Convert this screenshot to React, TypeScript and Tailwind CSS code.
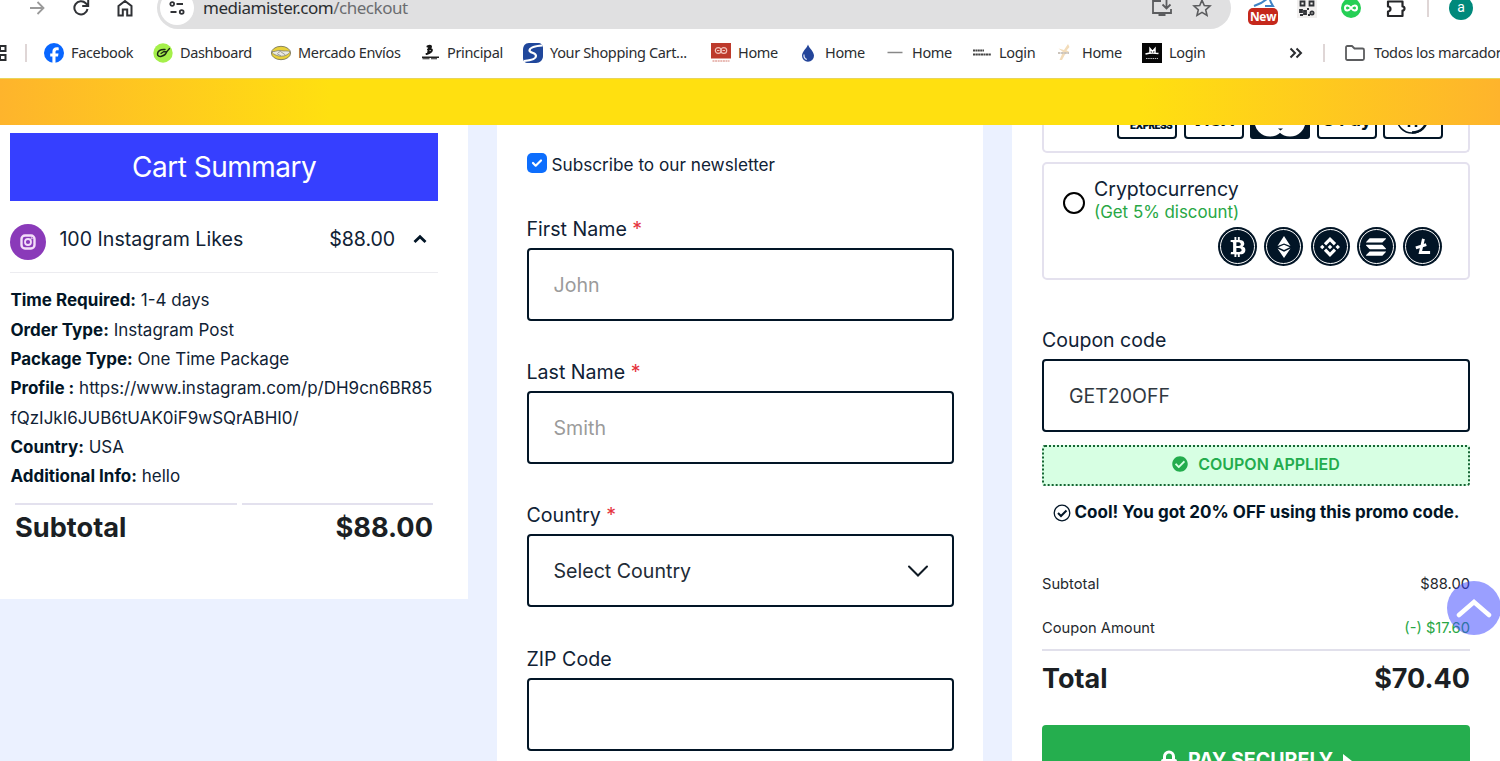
import React from 'react';
import { FaBtc, FaCheckCircle } from 'react-icons/fa';
import { SiBinance, SiSolana } from 'react-icons/si';

// Bookmark favicons
const FacebookIcon = () => (
  <svg className="w-5 h-5" viewBox="0 0 20 20">
    <circle cx="10" cy="10" r="10" fill="#0866ff" />
    <path d="M8.4 20v-6.6H6.2v-3h2.2V9c0-3.2 1.5-4.7 4.6-4.7.6 0 1.3.1 1.7.2v2.7h-1.2c-1.5 0-2 .6-2 2v1.2h3l-.5 3h-2.5V20z" fill="#fff" />
  </svg>
);

const DashboardIcon = () => (
  <svg className="w-5 h-5" viewBox="0 0 20 20">
    <circle cx="10" cy="10" r="9.7" fill="#a5f04a" />
    <path d="M12 6.5C7 6 4.500 8.500 4.500 11c0 2 2 3 4 2.300 2-.6 4.500-2.300 5-4.300" fill="none" stroke="#1c2b12" strokeWidth="1.5" strokeLinecap="round" />
    <path d="M8 10.500l3-2 2.500.5 3-3.500" fill="none" stroke="#1c2b12" strokeWidth="1.3" strokeLinecap="round" />
  </svg>
);

const MercadoIcon = () => (
  <svg className="w-5 h-5" viewBox="0 0 20 20">
    <ellipse cx="10" cy="10" rx="9.6" ry="6.7" fill="#e8d13b" stroke="#6d6b52" strokeWidth=".8" />
    <path d="M1 8.500c3 .3 4.500-.7 6.500-1 2-.2 3.500.5 5.500.5s4-.2 6 .5c0 1-2 3-4.500 4-2 .8-6.500 1-8.500 0C3.500 11.500 1 10.500 1 8.500z" fill="#e9e9e2" stroke="#77756a" strokeWidth=".7" />
    <path d="M7 9.500l2.500-1 5 3.500M6 10.500l4 2.500" fill="none" stroke="#8b8a80" strokeWidth=".8" />
  </svg>
);

const PrincipalIcon = () => (
  <svg className="w-5 h-5" viewBox="0 0 20 20">
    <path d="M7.5 3.500c3-1.500 5-.5 2 2.700M8 6.500c5-1.500 5 1.500 1 3.500L6.500 11M9.500 3L8 10.500" fill="none" stroke="#151515" strokeWidth="2" strokeLinecap="round" />
    <path d="M2 13.500h17v1.500H2zM2.500 15.300h7v1h-7zM11 15.300h6v1h-6z" fill="#222" />
  </svg>
);

const ShoppingIcon = () => (
  <svg className="w-5 h-5" viewBox="0 0 20 20">
    <path d="M6 0h9c3 0 5 2 5 5v8c0 4-3 7-7 7H5c-3 0-5-2-5-5V7c0-4 2-7 6-7z" fill="#20479b" />
    <path d="M19.500 2.500C13 3 6.500 4.500 6.500 7.500c0 2.700 6.500 2 6.500 5.500 0 2.700-5 4.500-12 5" fill="none" stroke="#fff" strokeWidth="2.2" />
  </svg>
);

const RedIcon = () => (
  <svg className="w-5 h-5" viewBox="0 0 20 20">
    <path d="M0 0h20v15.500H0z" fill="#bd3a2c" />
    <circle cx="7.2" cy="7.5" r="2.9" fill="none" stroke="#f2c2ba" strokeWidth="1.2" />
    <circle cx="12.8" cy="7.5" r="2.9" fill="none" stroke="#f2c2ba" strokeWidth="1.2" />
    <path d="M6 7.500h2.500M11.500 7.500H14" stroke="#f2c2ba" />
    <path d="M1.500 18h17" stroke="#e2a59d" strokeWidth="1.6" strokeDasharray="2 .6" />
  </svg>
);

const DropIcon = () => (
  <svg className="w-5 h-5" viewBox="0 0 20 20">
    <path d="M10 1.500c1 3.500 6 7 6 11.300A6 6 0 0 1 4 12.800C4 8.500 9 5 10 1.500z" fill="#24459a" />
    <path d="M6 11.500c-.3 2.500.8 4.200 2.800 5" fill="none" stroke="#dfe6f7" strokeWidth="1.2" />
  </svg>
);

const DashIcon = () => (
  <svg className="w-5 h-5" viewBox="0 0 20 20">
    <path d="M2.500 9.500h15" stroke="#888" strokeWidth="1.5" />
  </svg>
);

const WordmarkIcon = () => (
  <svg className="w-5 h-5" viewBox="0 0 20 20">
    <path d="M1 7.500h11" stroke="#444" strokeWidth="1.8" strokeDasharray="2 .4" />
    <path d="M1 11.500h18" stroke="#444" strokeWidth="1.8" strokeDasharray="2.2 .4" />
  </svg>
);

const FeatherIcon = () => (
  <svg className="w-5 h-5" viewBox="0 0 20 20">
    <path d="M13 1L9 7 3.500 5.500 8 9l-3.500 8H7l3-5.500 4-3-2.500-1L14.500 4z" fill="#f3dcb9" />
    <path d="M3 10h11" stroke="#cbc4bc" strokeWidth="1.8" strokeDasharray="2.5 .6" />
  </svg>
);

const BlackIcon = () => (
  <svg className="w-5 h-5" viewBox="0 0 20 20">
    <path d="M0 0h20v20H0z" fill="#050505" />
    <path d="M8 10.500V5.500l2.500 3 2.500-3v5M3.500 11c4-1.200 9-1.200 13-.5" fill="none" stroke="#fff" strokeWidth="1.5" />
    <path d="M4 15.500h12" stroke="#bbb" strokeDasharray="1.5 .7" />
  </svg>
);

const bookmarks = [
  { label: 'Facebook', icon: FacebookIcon, width: 'w-[62px]' },
  { label: 'Dashboard', icon: DashboardIcon, width: 'w-[71px]' },
  { label: 'Mercado Envíos', icon: MercadoIcon, width: 'w-[102px]' },
  { label: 'Principal', icon: PrincipalIcon, width: 'w-[56px]' },
  { label: 'Your Shopping Cart...', icon: ShoppingIcon, width: 'w-[141px]' },
  { label: 'Home', icon: RedIcon, width: 'w-10' },
  { label: 'Home', icon: DropIcon, width: 'w-10' },
  { label: 'Home', icon: DashIcon, width: 'w-10' },
  { label: 'Login', icon: WordmarkIcon, width: 'w-9' },
  { label: 'Home', icon: FeatherIcon, width: 'w-10' },
  { label: 'Login', icon: BlackIcon, width: 'w-9' },
];

const details = [
  { label: 'Time Required:', value: '1-4 days' },
  { label: 'Order Type:', value: 'Instagram Post' },
  { label: 'Package Type:', value: 'One Time Package' },
  { label: 'Profile :', value: 'https://www.instagram.com/p/DH9cn6BR85fQzIJkI6JUB6tUAK0iF9wSQrABHI0/' },
  { label: 'Country:', value: 'USA' },
  { label: 'Additional Info:', value: 'hello' },
];

const EthereumIcon = () => (
  <svg className="w-[14px] h-[22px]" viewBox="0 0 14 22" fill="currentColor">
    <path d="M7 0l6.500 10L7 7.500.5 10zM7 8.700l5.800 2.500L7 14l-5.800-2.800zM.5 12.500L7 15.700l6.500-3.200L7 22z" />
  </svg>
);

const LitecoinIcon = () => (
  <svg className="w-[19px] h-[19px]" viewBox="0 0 20 20" fill="none" stroke="currentColor" strokeWidth="3">
    <path d="M11 2L7.700 16.300H18M3 11.500l11-3.500" />
  </svg>
);

const InstagramIcon = () => (
  <svg className="w-4 h-4" viewBox="0 0 16 16" fill="none" stroke="currentColor">
    <rect x="1.5" y="1.5" width="13" height="13" rx="3.5" strokeWidth="2.4" />
    <circle cx="8" cy="8" r="3" strokeWidth="1.8" />
    <circle cx="11.7" cy="4.3" r=".6" strokeWidth="1" />
  </svg>
);

const LockIcon = () => (
  <svg className="w-[18px] h-[21px]" viewBox="0 0 18 21">
    <path d="M4.500 10V6.500a4.500 4.500 0 0 1 9 0V10" fill="none" stroke="currentColor" strokeWidth="3" />
    <rect x="1" y="9" width="16" height="12" rx="2" fill="currentColor" />
  </svg>
);

function Toolbar() {
  return (
    <div className="h-[29px] overflow-hidden">
      <div className="h-[42px] -mt-[13px] flex items-center text-[#303236]">
        <svg className="w-5 h-5 ml-[27px]" viewBox="0 0 20 20" fill="none" stroke="#9a9a9a" strokeWidth="1.8">
          <path d="M3 10h13M10.500 4l6 6-6 6" />
        </svg>
        <svg className="w-5 h-5 ml-6" viewBox="0 0 20 20" fill="none" stroke="currentColor" strokeWidth="2">
          <path d="M16.500 11A6.600 6.600 0 1 1 14.800 5.300L17 7.500M17.200 2v6h-6" />
        </svg>
        <svg className="w-5 h-5 ml-6" viewBox="0 0 20 20" fill="none" stroke="currentColor" strokeWidth="2">
          <path d="M3.500 8L10 3l6.500 5v9.500h-4.300v-6H7.800v6H3.500z" />
        </svg>
        <div className="h-[42px] w-[1074px] ml-[22px] rounded-full bg-[#e0e0e1] flex items-center">
          <div className="w-[34px] h-[34px] ml-[3px] rounded-full bg-white flex items-center justify-center">
            <svg className="w-4 h-4" viewBox="0 0 16 16" fill="none" stroke="currentColor" strokeWidth="1.8">
              <circle cx="3.2" cy="4" r="1.9" />
              <path d="M7.500 4H14M1.500 12h6" />
              <circle cx="12.7" cy="12" r="1.9" />
            </svg>
          </div>
          <span className="ml-[9px] font-['Noto_Sans'] text-[17px] tracking-[-0.47px] text-[#2b2d30]">
            mediamister.com<span className="text-[#6b6d70]">/checkout</span>
          </span>
          <svg className="w-5 h-5 ml-auto text-[#5b5c5e]" viewBox="0 0 20 20" fill="none" stroke="currentColor" strokeWidth="1.8">
            <path d="M9 3H1v12h18v-4M6.500 17h7M14.500 1v9M10.500 6.500l4 4 4-4" />
          </svg>
          <svg className="w-5 h-5 ml-5 mr-[19px] text-[#5b5c5e]" viewBox="0 0 20 20" fill="none" stroke="currentColor" strokeWidth="1.6">
            <path d="M10 2.200l2.300 5.300 5.700.5-4.300 3.800 1.300 5.600-5-3-5 3 1.300-5.600L2 8l5.700-.5z" />
          </svg>
        </div>
        <div className="relative w-[30px] h-[42px] ml-[17px]">
          <svg className="absolute left-1 top-[9px] w-6 h-5" viewBox="0 0 24 20" fill="none" stroke="#3f83c5" strokeWidth="2">
            <path d="M2 10l7-3 9-6c-1 3 1 6 3 9h-8" />
          </svg>
          <span className="absolute left-0 top-[21px] w-[30px] h-[17px] rounded-[5px] bg-[#c5281c] text-white font-['Open_Sans'] font-bold text-[12px] leading-[17px] text-center tracking-[-0.3px]">
            New
          </span>
        </div>
        <svg className="w-5 h-5 ml-[19px]" viewBox="0 0 20 20" fill="none" stroke="#303236" strokeWidth="1.8">
          <path d="M0 0h20v20H0z" fill="#f1efee" stroke="none" />
          <path d="M3.500 3.500h4v4h-4zM12.500 3.500h4v4h-4zM3 12h2v2H3zM7 13h2v3H7zM3 17h3M10 11h2M11 17h2" />
          <circle cx="15" cy="15" r="1.6" />
        </svg>
        <svg className="w-5 h-5 ml-6" viewBox="0 0 20 20" fill="none" stroke="#fff" strokeWidth="2">
          <circle cx="10" cy="10" r="10" fill="#25cf55" stroke="none" />
          <path d="M10 10C7.500 6.500 4 7 4 10s3.500 3.500 6 0 6-3 6 0-3.500 3.500-6 0z" />
        </svg>
        <svg className="w-[22px] h-[22px] ml-6" viewBox="0 0 22 22" fill="none" stroke="#252629" strokeWidth="2.2" strokeLinejoin="round">
          <path d="M3 4.500h14.500v5a2 2 0 0 1 0 4V19H3v-4.500a2.400 2.400 0 0 0 0-5z" />
        </svg>
        <div className="w-0.5 h-[18px] ml-[20px] bg-[#dfd6d6]" />
        <div className="w-6 h-6 ml-5 rounded-full bg-[#00897b] text-white text-[14px] leading-[23px] text-center font-['Roboto']">a</div>
      </div>
    </div>
  );
}

function BookmarksBar() {
  return (
    <div className="h-[49px] pb-0.5 flex items-center text-[#2b2d30] font-['Noto_Sans'] text-[14.5px] tracking-[-0.35px] whitespace-nowrap">
      <svg className="w-[7px] h-[18px] shrink-0" viewBox="0 0 7 18" fill="none" stroke="currentColor" strokeWidth="2">
        <path d="M0 2h5.500v5H0zM0 11h5.500v5H0z" />
      </svg>
      <div className="w-0.5 h-[18px] ml-[18px] shrink-0 bg-[#dfd6d6]" />
      <div className="ml-[17px] flex gap-5">
        {bookmarks.map(({ label, icon: Icon, width }, i) => (
          <div key={i} className="flex items-center gap-[7px]">
            <Icon />
            <span className={width}>{label}</span>
          </div>
        ))}
      </div>
      <svg className="w-[14px] h-[12px] ml-[84px] shrink-0" viewBox="0 0 14 12" fill="none" stroke="currentColor" strokeWidth="2">
        <path d="M1.500 1.500L6 6l-4.500 4.500M7.500 1.500L12 6l-4.500 4.500" />
      </svg>
      <div className="w-0.5 h-[18px] ml-[20px] shrink-0 bg-[#dfd6d6]" />
      <svg className="w-5 h-[16px] ml-5 shrink-0" viewBox="0 0 20 16" fill="none" stroke="#5b5c5e" strokeWidth="1.8" strokeLinejoin="round">
        <path d="M1 2.500C1 1.500 1.500 1 2.500 1H7l2.500 2.500H17.500c1 0 1.500.5 1.500 1.500v8.500c0 1-.5 1.500-1.500 1.500h-15c-1 0-1.500-.5-1.500-1.500z" />
      </svg>
      <span className="ml-[9px]">Todos los marcadores</span>
    </div>
  );
}

function CartSummary() {
  return (
    <section className="w-[468px] h-[474px] shrink-0 bg-white pt-2 pl-[10.4px] pr-[30px]">
      <h2 className="h-[68px] bg-[#363fff] text-white text-[28px] leading-[68px] text-center tracking-[-0.5px]">Cart Summary</h2>
      <div className="h-[72px] flex items-center border-b border-[#ececf0] text-[19.6px]">
        <div className="w-9 h-9 mt-[10px] rounded-full bg-[#8a3ab9] flex items-center justify-center text-[#f3def9]">
          <InstagramIcon />
        </div>
        <span className="ml-[13px] mt-[7px]">100 Instagram Likes</span>
        <span className="ml-auto mt-[7px] tracking-[-0.1px]">$88.00</span>
        <svg className="w-[14px] h-[10px] ml-[18px] mr-[11px] mt-[5px]" viewBox="0 0 14 10" fill="none" stroke="#021526" strokeWidth="2.8">
          <path d="M1.500 8L7 2.700 12.500 8" />
        </svg>
      </div>
      <div className="mt-[13.2px] text-[17px] leading-[29.35px] break-all">
        {details.map((item) => (
          <p key={item.label}>
            <b className="font-bold text-[#021526]">{item.label}</b> {item.value}
          </p>
        ))}
      </div>
      <div className="ml-[4.6px] mr-[5px] mt-[11.8px] flex gap-[5px] text-[27.2px] leading-[46px] font-bold text-[#1b1f24]">
        <div className="w-[222px] border-t-2 border-[#e3e1ee]">Subtotal</div>
        <div className="flex-1 border-t-2 border-[#e3e1ee] text-right">$88.00</div>
      </div>
    </section>
  );
}

interface FieldProps {
  label: string;
  value?: string;
  required?: boolean;
  muted?: boolean;
  select?: boolean;
}

function Field({ label, value, required, muted, select }: FieldProps) {
  return (
    <div className="h-[143.2px]">
      <label className="block h-[33px] leading-[29px] text-[19.6px]">
        {label} {required && <span className="text-[#e5343d]">*</span>}
      </label>
      <div className="h-[73px] px-[25px] flex items-center justify-between border-2 border-[#021526] rounded-[4px] text-[19.6px]">
        <span className={muted ? 'pt-0.5 text-[#9b9b9b]' : 'pt-0.5 text-[#212b36]'}>{value}</span>
        {select && (
          <svg className="w-[22px] h-3 mr-[-2px]" viewBox="0 0 22 12" fill="none" stroke="#101a24" strokeWidth="2" strokeLinecap="round">
            <path d="M2 1.500l9 9 9-9" />
          </svg>
        )}
      </div>
    </div>
  );
}

function BillingForm() {
  return (
    <section className="w-[486px] shrink-0 ml-[29px] bg-white pl-[29.5px] pr-[29.5px] pt-[28px]">
      <label className="flex items-center h-5 text-[17.2px]">
        <span className="w-5 h-5 rounded-[5px] bg-[#0d6efd] flex items-center justify-center">
          <svg className="w-3 h-3" viewBox="0 0 12 12" fill="none" stroke="#fff" strokeWidth="2.2" strokeLinecap="round" strokeLinejoin="round">
            <path d="M2 6l2.700 2.700L10 3.500" />
          </svg>
        </span>
        <span className="ml-[5px] mt-1">Subscribe to our newsletter</span>
      </label>
      <div className="mt-[42px]">
        <Field label="First Name" value="John" required muted />
        <Field label="Last Name" value="Smith" required muted />
        <Field label="Country" value="Select Country" required select />
        <Field label="ZIP Code" />
      </div>
    </section>
  );
}

function Coin({ children }: { children: React.ReactNode }) {
  return (
    <div className="w-[39px] h-[39px] p-0.5 rounded-full bg-[#021526]">
      <div className="w-[35px] h-[35px] border border-white rounded-full flex items-center justify-center text-white">{children}</div>
    </div>
  );
}

function PaymentCards() {
  return (
    <div className="flex gap-[6.5px] -mt-[28px] h-[42px] text-[#021526] font-bold">
      <div className="w-[60px] border-2 border-[#021526] rounded-[4px] flex items-end justify-center pl-2 pb-[4px] text-[10px] tracking-[-0.7px] font-black">EXPRESS</div>
      <div className="w-[60px] border-2 border-[#021526] rounded-[4px] flex items-end justify-center pb-[5px] text-[18px] leading-6 italic">VISA</div>
      <svg className="w-[60px] h-[42px]" viewBox="0 0 60 42">
        <rect width="60" height="42" rx="3" fill="#021526" />
        <circle cx="20" cy="24" r="15.5" fill="#fff" />
        <circle cx="40" cy="24" r="15.5" fill="#fff" />
        <path d="M28 31.500h5l-2.500 2z" fill="#021526" />
      </svg>
      <div className="w-[60px] border-2 border-[#021526] rounded-[4px] flex items-end justify-center pb-[5px] text-[18px] leading-6">G Pay</div>
      <svg className="w-[60px] h-[42px]" viewBox="0 0 60 42" fill="none" stroke="#021526" strokeWidth="2">
        <rect x="1" y="1" width="58" height="40" rx="3" />
        <circle cx="29" cy="21" r="15" strokeWidth="1.5" />
        <path d="M26 14v16M33 14v16M29 35.500c9 0 15-6 15-15" strokeWidth="2.5" />
      </svg>
    </div>
  );
}

function Payment() {
  return (
    <section className="w-[488px] shrink-0 ml-[29px] bg-white pl-[30px] pr-[30px] overflow-hidden">
      <div className="h-7 px-[25px] border-2 border-t-0 border-[#e4e1ee] rounded-b-[5px] flex justify-end">
        <PaymentCards />
      </div>
      <div className="mt-[9px] h-[118px] border-2 border-[#e4e1ee] rounded-[5px] px-[19px] pt-[13px]">
        <div className="flex items-center">
          <span className="w-[22px] h-[22px] mt-1.5 border-2 border-black rounded-full" />
          <div className="ml-[9px]">
            <p className="text-[19.5px] leading-[24px]">Cryptocurrency</p>
            <p className="text-[16.9px] leading-[22px] text-[#28a745]">(Get 5% discount)</p>
          </div>
        </div>
        <div className="mt-1 mr-[7px] flex justify-end gap-[7.2px]">
          <Coin><FaBtc className="w-5 h-5" /></Coin>
          <Coin><EthereumIcon /></Coin>
          <Coin><SiBinance className="w-[20px] h-[20px]" /></Coin>
          <Coin><SiSolana className="w-[20px] h-[20px]" /></Coin>
          <Coin><LitecoinIcon /></Coin>
        </div>
      </div>

      <p className="mt-[46px] text-[19.5px] leading-7">Coupon code</p>
      <div className="mt-[5px] h-[73px] px-[25px] pt-0.5 flex items-center border-2 border-[#021526] rounded-[4px] text-[19.5px] text-[#303840]">GET20OFF</div>
      <div className="mt-[13px] h-[41px] pb-[3px] flex items-center justify-center gap-[10px] border-2 border-dotted border-[#166534] rounded-[3px] bg-[#d7ffe3] text-[16px] font-semibold text-[#23ac4d]">
        <FaCheckCircle className="w-4 h-4" />
        COUPON APPLIED
      </div>
      <p className="mt-3 h-[29px] flex items-center justify-center gap-1 text-[17px] font-bold text-[#021526] whitespace-nowrap">
        <svg className="w-[18px] h-[18px]" viewBox="0 0 18 18" fill="none" stroke="#021526" strokeWidth="1.3">
          <circle cx="9" cy="9" r="7.8" />
          <path d="M5 9l3 3 5.500-5.500" strokeWidth="2" />
        </svg>
        Cool! You got 20% OFF using this promo code.
      </p>

      <div className="mt-[45px] text-[14.7px] text-[#25292e]">
        <div className="flex justify-between h-11 leading-[24px]">
          <span>Subtotal</span>
          <span>$88.00</span>
        </div>
        <div className="flex justify-between h-[33px] leading-[24px]">
          <span>Coupon Amount</span>
          <span className="text-[#28a745]">(-) $17.60</span>
        </div>
      </div>
      <div className="flex justify-between border-t-2 border-[#e1e0eb] pt-[6px] text-[27px] leading-[44px] font-bold text-[#1b1f24]">
        <span>Total</span>
        <span>$70.40</span>
      </div>
      <div className="mt-[24px] h-[73px] pb-0.5 flex items-center justify-center gap-[10px] rounded-[4px] bg-[#25ae4e] text-white text-[19.6px] font-bold">
        <LockIcon />
        <span>PAY SECURELY</span>
        <span className="border-y-[7px] border-y-transparent border-l-[9px] border-l-white" />
      </div>
    </section>
  );
}

export default function App() {
  return (
    <div className="relative w-[1500px] h-[761px] overflow-hidden bg-[#ebf1ff] text-[#102235] font-['Inter',sans-serif]">
      <header className="bg-white">
        <Toolbar />
        <BookmarksBar />
      </header>
      <div className="h-[47px] border-t border-[#e8d55c] bg-[linear-gradient(90deg,#feb42c_0%,#ffe010_22%,#ffe010_76%,#feb42c_100%)]" />
      <main className="flex h-[636px]">
        <CartSummary />
        <BillingForm />
        <Payment />
      </main>
      <button className="absolute left-[1447px] top-[581px] w-[54px] h-[54px] rounded-full bg-[#363fff]/50 flex items-center justify-center">
        <svg className="w-9 h-5" viewBox="0 0 36 20" fill="none" stroke="#fff" strokeWidth="4.5" strokeLinecap="round">
          <path d="M3 17L18 4l15 13" />
        </svg>
      </button>
    </div>
  );
}
